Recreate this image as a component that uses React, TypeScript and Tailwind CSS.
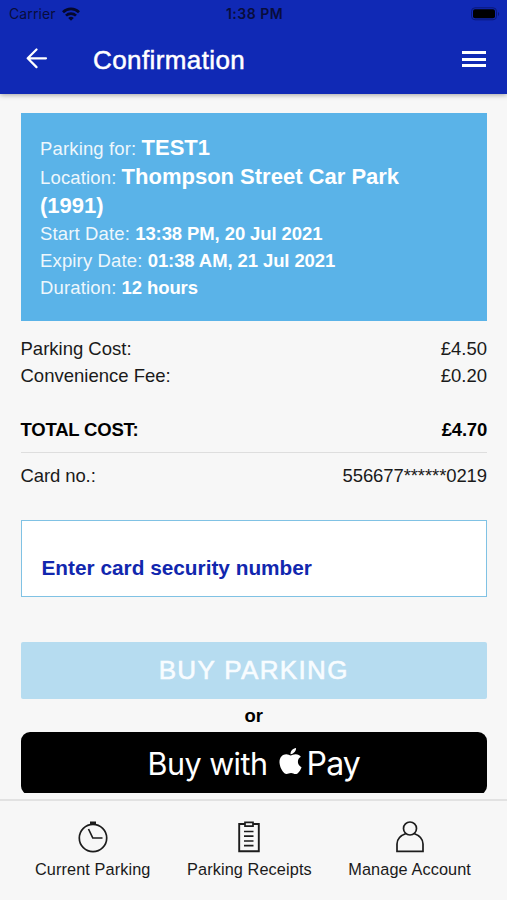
import type { ReactNode } from "react";
import { FaApple } from "react-icons/fa";

const details = [
    { label: "Parking for:", value: "TEST1", large: true },
    { label: "Location:", value: "Thompson Street Car Park (1991)", large: true },
    { label: "Start Date:", value: "13:38 PM, 20 Jul 2021", large: false },
    { label: "Expiry Date:", value: "01:38 AM, 21 Jul 2021", large: false },
    { label: "Duration:", value: "12 hours", large: false },
];

function StatusBar() {
    return (
        <div className="grid h-[27px] grid-cols-3 items-center pl-[9px] pr-[7px] font-['Inter'] text-[14px] text-[#080d3c]">
            <div className="flex items-center gap-[6px]">
                <span className="tracking-[0.1px]">Carrier</span>
                <svg width="18" height="14" viewBox="0 0 18 14" fill="none" stroke="#05082c" strokeWidth="2.7">
                    <path d="M1 5.2a11.4 11.4 0 0 1 16 0" />
                    <path d="M4 8.6a7.1 7.1 0 0 1 10 0" />
                    <path d="M9 13.8 6.2 11a4 4 0 0 1 5.6 0Z" fill="#05082c" stroke="none" />
                </svg>
            </div>
            <span className="text-center font-semibold tracking-[0.5px]">1:38 PM</span>
            <div className="flex justify-end">
                <svg width="29" height="14" viewBox="0 0 29 14">
                    <rect x="0.5" y="0.8" width="25" height="12" rx="3.5" fill="none" stroke="#0a1878" />
                    <rect x="2" y="2.3" width="22" height="9" rx="2" fill="#000" />
                    <path d="M27 5v4c1.5-.5 1.5-3.5 0-4Z" fill="#0a1878" />
                </svg>
            </div>
        </div>
    );
}

function CostRow({ label, value }: { label: string; value: string }) {
    return (
        <div className="flex justify-between">
            <span>{label}</span>
            <span>{value}</span>
        </div>
    );
}

function NavItem({ label, children }: { label: string; children: ReactNode }) {
    return (
        <button className="flex flex-col items-center gap-[2px]">
            <svg width="32" height="34" viewBox="0 0 32 34" fill="none" stroke="#1c1c1c" strokeWidth="1.7">
                {children}
            </svg>
            <span className="whitespace-nowrap">{label}</span>
        </button>
    );
}

export default function App() {
    return (
        <div className="flex h-[900px] w-[507px] flex-col overflow-hidden bg-[#f7f7f7] font-['Liberation_Sans',sans-serif] text-[18.5px] leading-[27px] text-[#1a1a1a]">
            <header className="relative h-[94px] shrink-0 bg-[#1029b5] shadow-[0_1px_5px_rgba(0,0,0,0.35)]">
                <StatusBar />
                <div className="flex h-[64px] items-center pl-[26px] pr-[21px] text-white">
                    <svg width="22" height="22" viewBox="0 0 22 22" fill="none" stroke="currentColor" strokeWidth="2.2" strokeLinecap="round" strokeLinejoin="round">
                        <path d="M10.5 1.5 1.7 10.3 10.5 19.1M2 10.3h18" />
                    </svg>
                    <h1 className="ml-[45px] pt-0.5 text-[26px] tracking-[0.4px] [-webkit-text-stroke:0.5px]">Confirmation</h1>
                    <div className="ml-auto flex w-6 flex-col gap-[3.5px]">
                        <span className="h-[3px] bg-white" />
                        <span className="h-[3px] bg-white" />
                        <span className="h-[3px] bg-white" />
                    </div>
                </div>
            </header>

            <main className="h-[699px] shrink-0 overflow-hidden pl-[20.5px] pr-5 pt-[19px]">
                {/* Booking summary */}
                <section className="h-[208px] bg-[#5ab3e8] pb-5 pl-[19.5px] pr-10 pt-[21px] text-white">
                    {details.map((d) => (
                        <p key={d.label} className={d.large ? "leading-[29px]" : "leading-[26.8px]"}>
                            <span className="tracking-[0.15px] opacity-90">{d.label}</span>{" "}
                            <strong className={d.large ? "text-[22px] leading-none" : "tracking-[-0.1px]"}>{d.value}</strong>
                        </p>
                    ))}
                </section>

                {/* Costs */}
                <section className="mt-[14px] border-b border-[#dedede] pb-[9px]">
                    <CostRow label="Parking Cost:" value="£4.50" />
                    <CostRow label="Convenience Fee:" value="£0.20" />
                    <div className="mt-[27px] font-bold tracking-[-0.2px] text-black">
                        <CostRow label="TOTAL COST:" value="£4.70" />
                    </div>
                </section>
                <div className="mt-[9px] tracking-[-0.1px]">
                    <CostRow label="Card no.:" value="556677******0219" />
                </div>

                <div className="mt-[31px] flex h-[77px] items-end border-[1.5px] border-[#80c2e4] bg-white px-5 pb-[15px] text-[20.8px] font-bold text-[#1127ae]">
                    Enter card security number
                </div>

                <button className="mt-[45px] flex h-[57px] w-full items-center justify-center rounded-[2px] bg-[#b6dcf0] text-[26px] tracking-[1.35px] text-[#f8fcff] [-webkit-text-stroke:0.6px]">
                    BUY PARKING
                </button>
                <p className="mt-[3px] text-center font-bold text-black">or</p>
                <button className="mt-[2.5px] flex h-[63px] w-full items-center justify-center rounded-[9px] bg-black font-['Inter'] text-white">
                    <span className="text-[30.5px] tracking-[-0.5px]">Buy with</span>
                    <FaApple className="mb-[5px] ml-[11px] mr-px h-[30px] w-[23px]" />
                    <span className="ml-1 text-[32px] tracking-[-0.8px]">Pay</span>
                </button>
            </main>

            <nav className="mt-[6px] flex h-[101px] shrink-0 justify-between border-t-2 border-[#e2e2e2] pl-[35px] pr-[36px] pt-[19px] text-[16.3px] tracking-[0.1px]">
                <NavItem label="Current Parking">
                    <circle cx="16" cy="18" r="13.7" />
                    <path d="M13 2.8h6" strokeWidth="2.6" />
                    <path d="M11.5 9 15.8 18H25.5" />
                </NavItem>
                <NavItem label="Parking Receipts">
                    <path d="M12 4H6.2v27.3h19.6V4H20" strokeWidth="1.9" />
                    <path d="M12 2.3h8v3.8h-8ZM11 11.5h9.5M11 16.2h9.5M11 21h9.5M11 25.7h9.5" />
                </NavItem>
                <NavItem label="Manage Account">
                    <circle cx="16" cy="8.5" r="6.5" />
                    <path d="M12 13.5C6.500 15.500 3 19 3 24v7.300h26V24c0-5-3.500-8.500-9-10.500" />
                </NavItem>
            </nav>
        </div>
    );
}
